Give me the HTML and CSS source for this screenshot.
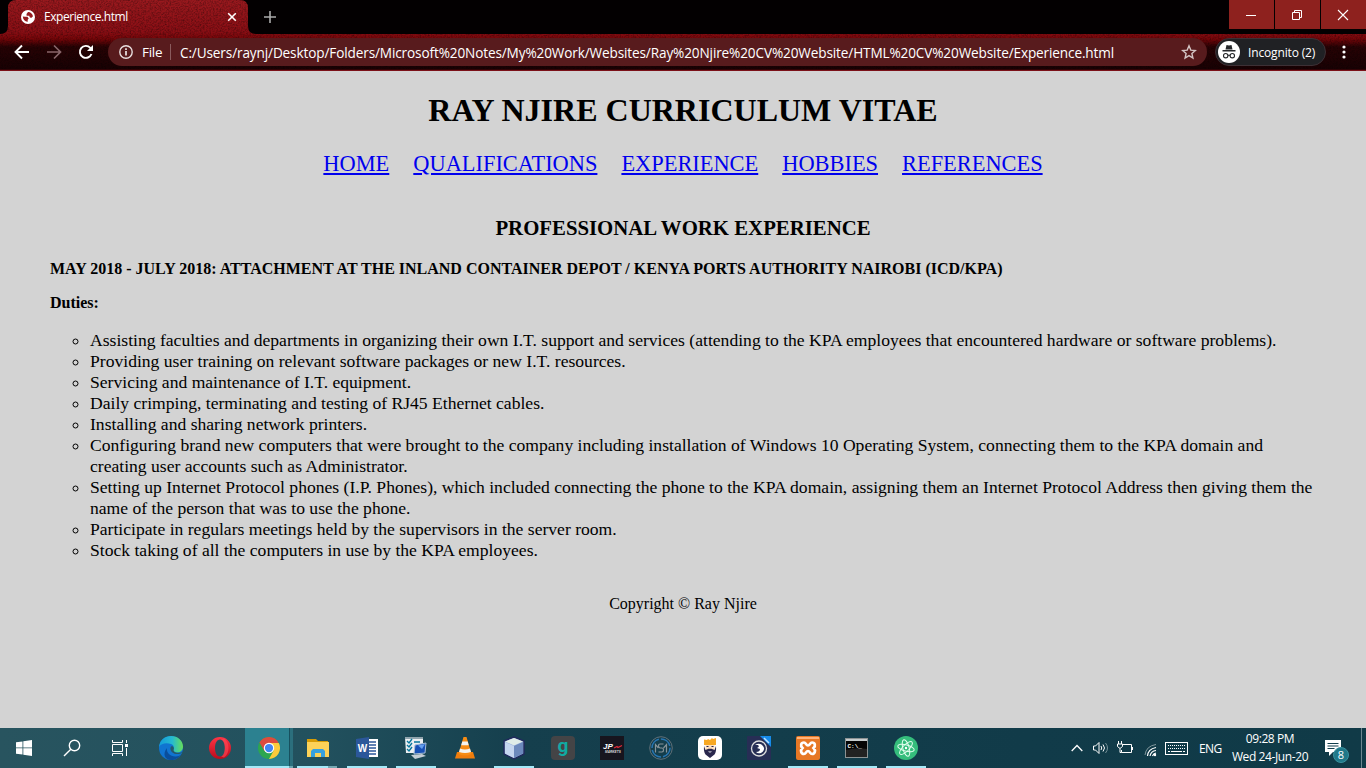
FILE: index.html
```
<!DOCTYPE html>
<html lang="en">
<head>
<meta charset="utf-8">
<title>Experience.html</title>
<link rel="stylesheet" href="styles.css">
</head>
<body>
<div class="screen">
<header class="browser">
  <svg class="texture" width="1366" height="71" viewBox="0 0 1366 71">
    <defs>
      <linearGradient id="red" x1="0" y1="0" x2="0" y2="1">
        <stop offset="0" stop-color="#9a191e"/><stop offset=".45" stop-color="#8a0e14"/><stop offset=".55" stop-color="#760508"/><stop offset=".66" stop-color="#280204"/><stop offset="1" stop-color="#180103"/>
      </linearGradient>
      <filter id="grain" x="0" y="0" width="100%" height="100%">
        <feTurbulence type="fractalNoise" baseFrequency=".6 .65" numOctaves="3" seed="4"/>
        <feColorMatrix values="0 0 0 0 0  0 0 0 0 0  0 0 0 0 0  .75 0 0 0 -.28"/>
      </filter>
    </defs>
    <rect width="1366" height="71" fill="url(#red)"/>
    <rect width="1366" height="71" filter="url(#grain)"/>
    <path d="M0 0H16Q8 0 8 8V26Q8 34 0 34ZM240 0H1366V34H256Q248 34 248 26V8Q248 0 240 0Z" fill="#030001"/>
    <rect y="69" width="1366" height="1" fill="#300205"/><rect y="70" width="1366" height="1" fill="#7b1118"/>
  </svg>
  <div class="tabs">
    <div class="tab">
      <svg width="14" height="14" viewBox="0 0 14 14"><circle cx="7" cy="7" r="7" fill="#fff"/><path d="M1.800 6.500l2.400.3h2.300l1.200 1.600-1 1.300v2C4.500 12 2 10 1.800 6.500zM7 2c2-.3 4.500 1.500 5 4.200l-1.800 1.800-1.500-.7-.5-1.500H5.600L5.500 4z" fill="#971b20"/></svg>
      <span class="tab-title">Experience.html</span>
      <svg class="tab-x" width="10" height="10" viewBox="0 0 10 10"><path d="M1.200 1.200l7.600 7.600M8.800 1.200L1.200 8.800" stroke="#fff" stroke-width="1.600"/></svg>
    </div>
    <svg class="plus" width="12" height="12" viewBox="0 0 12 12"><path d="M6 0v12M0 6h12" stroke="#aaa" stroke-width="1.600"/></svg>
    <div class="win">
      <span><svg width="12" height="12"><path d="M1 6.500h10" stroke="#fff"/></svg></span>
      <span><svg width="12" height="12" fill="none" stroke="#fff"><path d="M1.500 3.500h7v7h-7zM3.500 3.500v-2h7v7h-2"/></svg></span>
      <span><svg width="12" height="12"><path d="M1 1l10 10M11 1L1 11" stroke="#fff" stroke-width="1.100"/></svg></span>
    </div>
  </div>
  <div class="tools">
    <svg class="nav" width="16" height="16" viewBox="0 0 16 16"><path d="M15 8H2M8 1.500L1.500 8 8 14.500" fill="none" stroke="#fff" stroke-width="1.900"/></svg>
    <svg class="nav" width="16" height="16" viewBox="0 0 16 16"><path d="M1 8h13M8 1.500L14.500 8 8 14.500" fill="none" stroke="#89666a" stroke-width="1.700"/></svg>
    <svg class="nav" width="16" height="16" viewBox="0 0 16 16"><path d="M13.500 10A6 6 0 1 1 12.300 3.800L13.800 5.300" fill="none" stroke="#fff" stroke-width="1.900"/><path d="M15 1v6H9z" fill="#fff"/></svg>
    <div class="omni">
      <svg width="14" height="14" viewBox="0 0 14 14"><circle cx="7" cy="7" r="6.200" fill="none" stroke="#e8dede" stroke-width="1.400"/><path d="M7 6v4.500M7 3.200v1.700" stroke="#fff" stroke-width="1.500"/></svg>
      <span class="file">File</span><i class="bar"></i>
      <span class="url">C:/Users/raynj/Desktop/Folders/Microsoft%20Notes/My%20Work/Websites/Ray%20Njire%20CV%20Website/HTML%20CV%20Website/Experience.html</span>
      <svg class="star" width="16" height="16" viewBox="0 0 16 16"><path d="M8 1.800l1.800 4.300 4.500.4-3.400 3 1 4.500L8 11.600 4.100 14l1-4.500-3.400-3 4.500-.4z" fill="none" stroke="#d3c4c4" stroke-width="1.400"/></svg>
    </div>
    <div class="incog">
      <svg width="22" height="22" viewBox="0 0 22 22"><circle cx="11" cy="11" r="11" fill="#fff"/><path d="M7.500 8.500l1-4.500 2.500.6 2.500-.6 1 4.500zM4.500 9h13v1.500h-13z" fill="#25272a"/><g fill="none" stroke="#25272a" stroke-width="1.100"><circle cx="7.700" cy="14.700" r="2.200"/><circle cx="14.300" cy="14.700" r="2.200"/><path d="M9.900 14.300h2.200"/></g></svg>
      <span>Incognito (2)</span>
    </div>
    <svg class="dots" width="4" height="14" viewBox="0 0 4 14" fill="#fff"><circle cx="2" cy="2" r="1.600"/><circle cx="2" cy="7" r="1.600"/><circle cx="2" cy="12" r="1.600"/></svg>
  </div>
</header>
<main class="page">
  <h1>RAY NJIRE CURRICULUM VITAE</h1>
  <nav class="links"><a href="#">HOME</a><a href="#">QUALIFICATIONS</a><a href="#">EXPERIENCE</a><a href="#">HOBBIES</a><a href="#">REFERENCES</a></nav>
  <h2>PROFESSIONAL WORK EXPERIENCE</h2>
  <h4 class="job">MAY 2018 - JULY 2018: ATTACHMENT AT THE INLAND CONTAINER DEPOT / KENYA PORTS AUTHORITY NAIROBI (ICD/KPA)</h4>
  <h4 class="duties">Duties:</h4>
  <ul class="list">
    <li>Assisting faculties and departments in organizing their own I.T. support and services (attending to the KPA employees that encountered hardware or software problems).</li>
    <li>Providing user training on relevant software packages or new I.T. resources.</li>
    <li>Servicing and maintenance of I.T. equipment.</li>
    <li>Daily crimping, terminating and testing of RJ45 Ethernet cables.</li>
    <li>Installing and sharing network printers.</li>
    <li>Configuring brand new computers that were brought to the company including installation of Windows 10 Operating System, connecting them to the KPA domain and creating user accounts such as Administrator.</li>
    <li>Setting up Internet Protocol phones (I.P. Phones), which included connecting the phone to the KPA domain, assigning them an Internet Protocol Address then giving them the name of the person that was to use the phone.</li>
    <li>Participate in regulars meetings held by the supervisors in the server room.</li>
    <li>Stock taking of all the computers in use by the KPA employees.</li>
  </ul>
  <p class="copy">Copyright © Ray Njire</p>
</main>
<footer class="taskbar">
  <div class="sys">
    <span><svg width="16" height="16" viewBox="0 0 16 16" fill="#fff"><path d="M0 2.300L6.500 1.400V7.500H0zM7.300 1.300L16 0V7.500H7.300zM0 8.300h6.500v6.300L0 13.700zM7.300 8.300H16V16l-8.700-1.300z"/></svg></span>
    <span><svg width="18" height="18" viewBox="0 0 18 18" fill="none" stroke="#fff" stroke-width="1.400"><circle cx="11.500" cy="6.500" r="5.200"/><path d="M7.800 10.200L1 17"/></svg></span>
    <span><svg width="18" height="16" viewBox="0 0 18 16" fill="none" stroke="#fff"><path d="M1.500 0v2.500h10V0M1.500 16v-2.500h10V16M1.500 4.500h10v7h-10zM15.500 0v3M15.500 8v8"/><path d="M14 4h3v3h-3z" fill="#fff" stroke="none"/></svg></span>
  </div>
  <div class="apps">
    <span><svg width="24" height="24" viewBox="0 0 24 24"><defs><linearGradient id="eg"><stop stop-color="#139bda"/><stop offset=".55" stop-color="#26bad0"/><stop offset="1" stop-color="#67df58"/></linearGradient></defs><circle cx="12" cy="12" r="12" fill="#1074d1"/><path d="M0 11C1 3.500 6 0 12 0c7 0 12 5 12 10.500 0 4-3 6-6 6s-4.500-1.500-4-2.500c1.500-2 1-5-2-6C8 6.500 2 7 0 11z" fill="url(#eg)"/><path d="M8 12c-1 5 4 9 9 8.500 2 0 4-.8 5-2C20 22 16 24 12 24 6 24 3 18 8 12z" fill="#0a4e9b"/><path d="M12 10.500c-2 3 1 7 5 7.500 3 .3 5-.3 6.700-2-2 1.200-9 1.500-9.200-2 1-1.500 0-5-2.500-3.500z" fill="#25586a"/></svg></span>
    <span><svg width="24" height="24" viewBox="0 0 24 24"><defs><linearGradient id="op" x2="0" y2="1"><stop stop-color="#ff3545"/><stop offset="1" stop-color="#b90c1c"/></linearGradient></defs><path fill-rule="evenodd" d="M12 1a11 11 0 1 0 0 22 11 11 0 0 0 0-22zm0 2.500c3 0 5 3.500 5 8.500s-2 8.500-5 8.500S7 17 7 12s2-8.500 5-8.500z" fill="url(#op)"/><path d="M13 3.500c5 1 5 16 0 17l3 1c6-4 6-15 0-19z" fill="#ff4a59" opacity=".6"/></svg></span>
    <span class="active run"><svg width="22" height="22" viewBox="0 0 24 24"><circle cx="12" cy="12" r="12" fill="#2ca650"/><path d="M12 12L1.600 6A12 12 0 0 1 22.400 6z" fill="#dd4b3e"/><path d="M12 6.500H22.700A12 12 0 0 1 12 24l5-9z" fill="#fccb3c"/><path d="M1.600 6l5.600 9.500L12 12V6.500z" fill="#dd4b3e"/><circle cx="12" cy="12" r="5.700" fill="#fff"/><circle cx="12" cy="12" r="4.500" fill="#4285f4"/></svg></span>
    <span class="run split"><svg width="22" height="20" viewBox="0 0 22 20"><path d="M0 1h9l2 2h10v5H0z" fill="#d79c05"/><path d="M0 4h22v15H0z" fill="#fcd258"/><path d="M4 19v-6l2-2h10l2 2v6h-4v-4H8v4z" fill="#36a1df"/></svg></span>
    <span class="run"><svg width="22" height="22" viewBox="0 0 22 22"><path d="M12 2h10v18H12z" fill="#fff"/><path d="M13 5h7m-7 3h7m-7 3h7m-7 3h7m-7 3h7" stroke="#2b579a" stroke-width="1.300"/><path d="M0 2L13 0v22L0 20z" fill="#2b579a"/><text x="1.800" y="14.700" class="word">W</text></svg></span>
    <span class="run"><svg width="22" height="22" viewBox="0 0 22 22"><path d="M0 0h18v16H1z" fill="#edf0f2"/><path d="M0 0h18v2H0z" fill="#90a4ad"/><path d="M2 4l2 2 3-4M2 8l2 2 3-4M2 12l2 2 3-4M9 5h6" fill="none" stroke="#08779d" stroke-width="1.400"/><path d="M10 8l11-2-1 10-11 1z" fill="#1750b5" stroke="#a8bed8"/><path d="M6 18l11-1 4 2-11 3z" fill="#c5ced5"/><path d="M13 8.500l7-1.500-3 5z" fill="#659fee"/></svg></span>
    <span><svg width="20" height="22" viewBox="0 0 20 22"><path d="M2 15h16l2 6.500H0z" fill="#ef7d0c"/><path d="M8.500 0h3l5 17q-6.500 3-13 0z" fill="#f78c14"/><path d="M7.300 4.500h5.400l1 3.800H6.200zM5 11.500q5 2 10 0l1 3.500q-6 2-12 0z" fill="#f4f3f0"/></svg></span>
    <span class="run"><svg width="24" height="24" viewBox="0 0 24 24"><path d="M12 1l10 4v13l-10 5L2 18V5z" fill="#9ab0dc" stroke="#202a5c" stroke-width="1.500"/><path d="M12 2l9 3.500-9 4-9-4z" fill="#e0ece8"/><path d="M3 6l9 4v12l-9-4.500z" fill="#c4d5ef"/><path d="M12 10l9-4v11.500L12 22z" fill="#6c89bc"/></svg></span>
    <span><svg width="24" height="24" viewBox="0 0 24 24"><rect width="24" height="24" rx="4" fill="#444446"/><text x="12" y="16" text-anchor="middle" class="gee">g</text></svg></span>
    <span><svg width="24" height="24" viewBox="0 0 24 24"><rect width="24" height="24" fill="#17151e"/><text x="3" y="12.500" class="jp">JP</text><text x="5" y="16.500" class="mk">MARKETS</text><path d="M14 12l3-1.500 1 1 4-2" stroke="#e22937" fill="none" stroke-width="1.300"/></svg></span>
    <span><svg width="24" height="24" viewBox="0 0 24 24" fill="none"><circle cx="12" cy="12" r="11.300" stroke="#607078"/><circle cx="12" cy="12" r="9" stroke="#2876b3" stroke-width="1.500" stroke-dasharray="12 2"/><path d="M6.500 16.500V8.500l3 3.500M17.500 16.500V8.500l-3 3.500M14.500 8H11q-1.500 0-1.500 1.800T11 12h2q1.500 0 1.500 2T13 16H9.500" stroke="#87949a" stroke-width="1.200"/></svg></span>
    <span><svg width="24" height="24" viewBox="0 0 24 24"><rect width="24" height="24" rx="5" fill="#fff"/><path d="M6 3.500l3 .5 1-1 2 1 2-2 1 1 3-1v7H6z" fill="#f7a823"/><path d="M7.500 9h9v6q-4.500 3-9 0z" fill="#ffe0bf"/><path d="M6 10l1.500 4 3-1.300h3l3 1.300L18 10q.5 6-1.500 8.500L12 22l-4.500-3.500Q5.500 16 6 10z" fill="#29284d"/><path d="M8.500 10.500h2m3 0h2" stroke="#29284d"/><path d="M10 15.500h4q-2 2-4 0z" fill="#fff"/></svg></span>
    <span><svg width="24" height="24" viewBox="0 0 24 24"><rect width="24" height="24" rx="1" fill="#272e55"/><path d="M13 0h11v11z" fill="#168bea"/><path d="M17 2l5 5" stroke="#bfe2ff" stroke-width="1.500"/><circle cx="12" cy="12.500" r="7.500" fill="none" stroke="#ddd" stroke-width="1.300"/><path d="M8 9q5-3 8 1t-2 7q-3 1-5-1 4 0 4-3l-3-1q3-1 1-3z" fill="#fff"/></svg></span>
    <span class="run"><svg width="24" height="24" viewBox="0 0 24 24"><rect width="24" height="24" rx="2" fill="#e77825"/><path d="M1 1h22v2H1z" fill="#ffb37a"/><path d="M8 6.500c-3 0-4 3-1.500 5.500C4 14.500 5 18 8 18c2 0 2-3 4-3s2 3 4 3c3 0 4-3.500 1.500-6C20 9.500 19 6.500 16 6.500c-2 0-2 3-4 3s-2-3-4-3z" fill="none" stroke="#fff" stroke-width="2.700"/></svg></span>
    <span class="run"><svg width="23" height="20" viewBox="0 0 23 20"><rect x=".5" y=".5" width="22" height="19" fill="#050505" stroke="#8c9293"/><path d="M1 1h21v2H1z" fill="#c8cdce"/><path d="M1 12q12-3 21-1v8H1z" fill="#222"/><text x="2.500" y="9.500" class="cmd">C:\_</text></svg></span>
    <span class="run"><svg width="24" height="24" viewBox="0 0 24 24"><circle cx="12" cy="12" r="12" fill="#35bd7c"/><g fill="none" stroke="#e4fff0" stroke-width="1"><ellipse cx="12" cy="12" rx="8.500" ry="3.200" transform="rotate(15 12 12)"/><ellipse cx="12" cy="12" rx="8.500" ry="3.200" transform="rotate(75 12 12)"/><ellipse cx="12" cy="12" rx="8.500" ry="3.200" transform="rotate(135 12 12)"/></g><circle cx="12" cy="12" r="1.200" fill="#fff"/></svg></span>
  </div>
  <div class="tray">
    <svg width="12" height="8" viewBox="0 0 12 8"><path d="M.7 7L6 1.500 11.300 7" fill="none" stroke="#fff" stroke-width="1.300"/></svg>
    <svg class="vol" width="16" height="14" viewBox="0 0 16 14" fill="none" stroke="#fff"><path d="M.5 5h2L6 1.500v11L2.500 9h-2zM8 5q1.500 2 0 4M10 3.500q3 3.500 0 7"/><path d="M12.500 2q4 5 0 10" stroke="#789299"/></svg>
    <svg class="bat" width="16" height="14" viewBox="0 0 16 14" fill="none" stroke="#fff"><path d="M6 3.500h8.500v8H4.500V9M15.500 6v3M1.500 0v3M4.500 0v3M.5 3h5v2.500L3 7.500.5 5.500zM3 7.500v4h1.500"/></svg>
    <svg class="wifi" width="13" height="14" viewBox="0 0 13 14" fill="none"><path d="M1 12Q2 3 12 1.500" stroke="#83999f"/><path d="M3.500 13Q4 6 12 4.500M6 13q1-5 6-5.500M8.500 13q1-2.500 3.500-3" stroke="#fff" stroke-width="1.200"/><circle cx="11" cy="12" r="1.200" fill="#fff"/></svg>
    <svg class="kbd" width="23" height="13" viewBox="0 0 23 13" fill="none" stroke="#fff"><rect x=".5" y=".5" width="22" height="12"/><path d="M3 3.500h17M3 6.500h17" stroke-dasharray="1 1"/><path d="M3 9.500h2m1 0h11m1 0h2"/></svg>
    <span class="eng">ENG</span>
    <div class="clock"><span>09:28 PM</span><span class="date">Wed 24-Jun-20</span></div>
    <div class="note"><svg width="16" height="17" viewBox="0 0 16 17"><path d="M0 0h16v12H8l-4 4v-4H0z" fill="#fff"/><path d="M2.500 3.500h11m-11 2.500h11M2.500 8.500h7" stroke="#123f4d"/></svg><b>8</b></div>
    <i class="peek"></i>
  </div>
</footer>
</div>
</body>
</html>
```
FILE: styles.css
```
* { box-sizing: border-box; }
body { margin: 0; overflow: hidden; }
svg { display: block; flex: none; }
.screen { width: 1366px; height: 768px; display: flex; flex-direction: column; }
.browser { height: 71px; flex: none; position: relative; font-family: "Open Sans", "Noto Sans", sans-serif; color: #fff; isolation: isolate; }
.texture { position: absolute; inset: 0; z-index: -1; }
.tabs { height: 34px; display: flex; }
.tab { width: 240px; margin-left: 8px; padding: 0 11px 0 13px; display: flex; align-items: center; }
.tab-title { font-size: 12px; line-height: 16px; margin: 0 0 0 9px; letter-spacing: -.45px; }
.tab-x { margin-left: auto; }
.plus { margin: 11px 0 0 16px; }
.win { margin-left: auto; display: flex; gap: 1px; height: 29px; }
.win span { width: 45px; padding-right: 2px; background: #8e211e; display: flex; align-items: center; justify-content: center; }
.tools { height: 36px; display: flex; align-items: center; padding-left: 14px; }
.nav { margin-right: 16px; }
.omni { width: 1099px; height: 28px; margin-left: -2px; border-radius: 14px; background: #581b1d; display: flex; align-items: center; padding: 0 10px 0 11px; white-space: nowrap; }
.file { font-size: 13.5px; width: 21px; margin-left: 9px; letter-spacing: -.3px; }
.bar { width: 1px; height: 16px; background: #8a5b5d; margin: 0 9px 0 7px; }
.url { font-size: 13.6px; letter-spacing: -.13px; }
.star { margin-left: auto; }
.incog { width: 111px; height: 28px; margin-left: 8px; border: 1px solid #3d3035; border-radius: 14px; background: #202124; display: flex; align-items: center; padding-left: 2px; white-space: nowrap; font-size: 12px; }
.incog span { margin-left: 8px; letter-spacing: -.15px; }
.dots { margin-left: 16px; }
.page { flex: 1; background: #d3d3d3; color: #000; font-family: "Liberation Serif", serif; padding: 0 50px; overflow: hidden; }
h1 { margin: 21px 0 0; font-size: 32px; line-height: 37px; text-align: center; }
.links { display: flex; justify-content: center; gap: 24px; margin-top: 22px; font-size: 22.4px; line-height: 26px; }
.links a { color: #00e; }
h2 { font-size: 20.8px; line-height: 24px; margin: 39px 0 0; text-align: center; }
h4 { font-size: 16px; line-height: 18px; margin: 0; }
.job { margin-top: 20px; }
.duties { margin-top: 16px; }
.list { font-size: 17.6px; line-height: 21px; margin: 18px 0 0; padding-left: 40px; list-style: circle; }
.copy { font-size: 16px; line-height: 18px; margin: 34px 0 0; text-align: center; }
.taskbar { height: 40px; flex: none; display: flex; background: linear-gradient(90deg, #28545f, #22515e 23%, #153f4d 38%, #113b49 75%, #103a47); color: #fff; font-family: "Open Sans", "Noto Sans", sans-serif; }
.sys, .apps { display: flex; }
.sys span { width: 48px; display: flex; align-items: center; justify-content: center; }
.apps { margin-left: 2px; }
.apps span { width: 49px; display: flex; align-items: center; justify-content: center; position: relative; }
.run::after { content: ""; position: absolute; left: 5px; width: 40px; bottom: 0; height: 2px; background: #a4e9f8; }
.active { background: linear-gradient(90deg, transparent 1px, #2c8190 1px 45px, #17505e 45px 46px, #2b6f7d 46px 49px); }
.active::after { left: 1px; width: 48px; background: linear-gradient(90deg, #a4e9f8 44px, #6ca7b1 44px); }
.split::after { left: 4px; background: linear-gradient(90deg, #a4e9f8 31px, #76a8b2 31px); }
.word { font: bold 10px "Liberation Sans", sans-serif; fill: #fff; }
.gee { font: bold 19px Roboto, sans-serif; fill: #10aaa2; }
.jp { font: italic bold 8px "Liberation Sans", sans-serif; fill: #fff; }
.mk { font: italic bold 3.2px "Liberation Sans", sans-serif; fill: #ddd; }
.cmd { font: bold 6px "Liberation Mono", monospace; fill: #fff; }
.tray { margin-left: auto; display: flex; align-items: center; }
.vol { margin-left: 10px; }
.bat { margin-left: 8px; }
.wifi { margin-left: 11px; margin-top: 4px; }
.kbd { margin-left: 8px; }
.eng { font-size: 12px; margin-left: 11px; width: 24px; letter-spacing: -.6px; }
.clock { width: 80px; margin-left: 7px; display: flex; flex-direction: column; align-items: center; font-size: 12px; line-height: 18px; letter-spacing: -.4px; white-space: nowrap; }
.note { margin-left: 15px; width: 36px; position: relative; }
.note b { position: absolute; left: 8px; top: 7px; width: 16px; height: 16px; border-radius: 50%; background: #207889; border: 1px solid #3a929f; font: 11px/14px "Open Sans", sans-serif; text-align: center; }
.peek { width: 5px; height: 40px; border-left: 1px solid #6c8790; }
```
